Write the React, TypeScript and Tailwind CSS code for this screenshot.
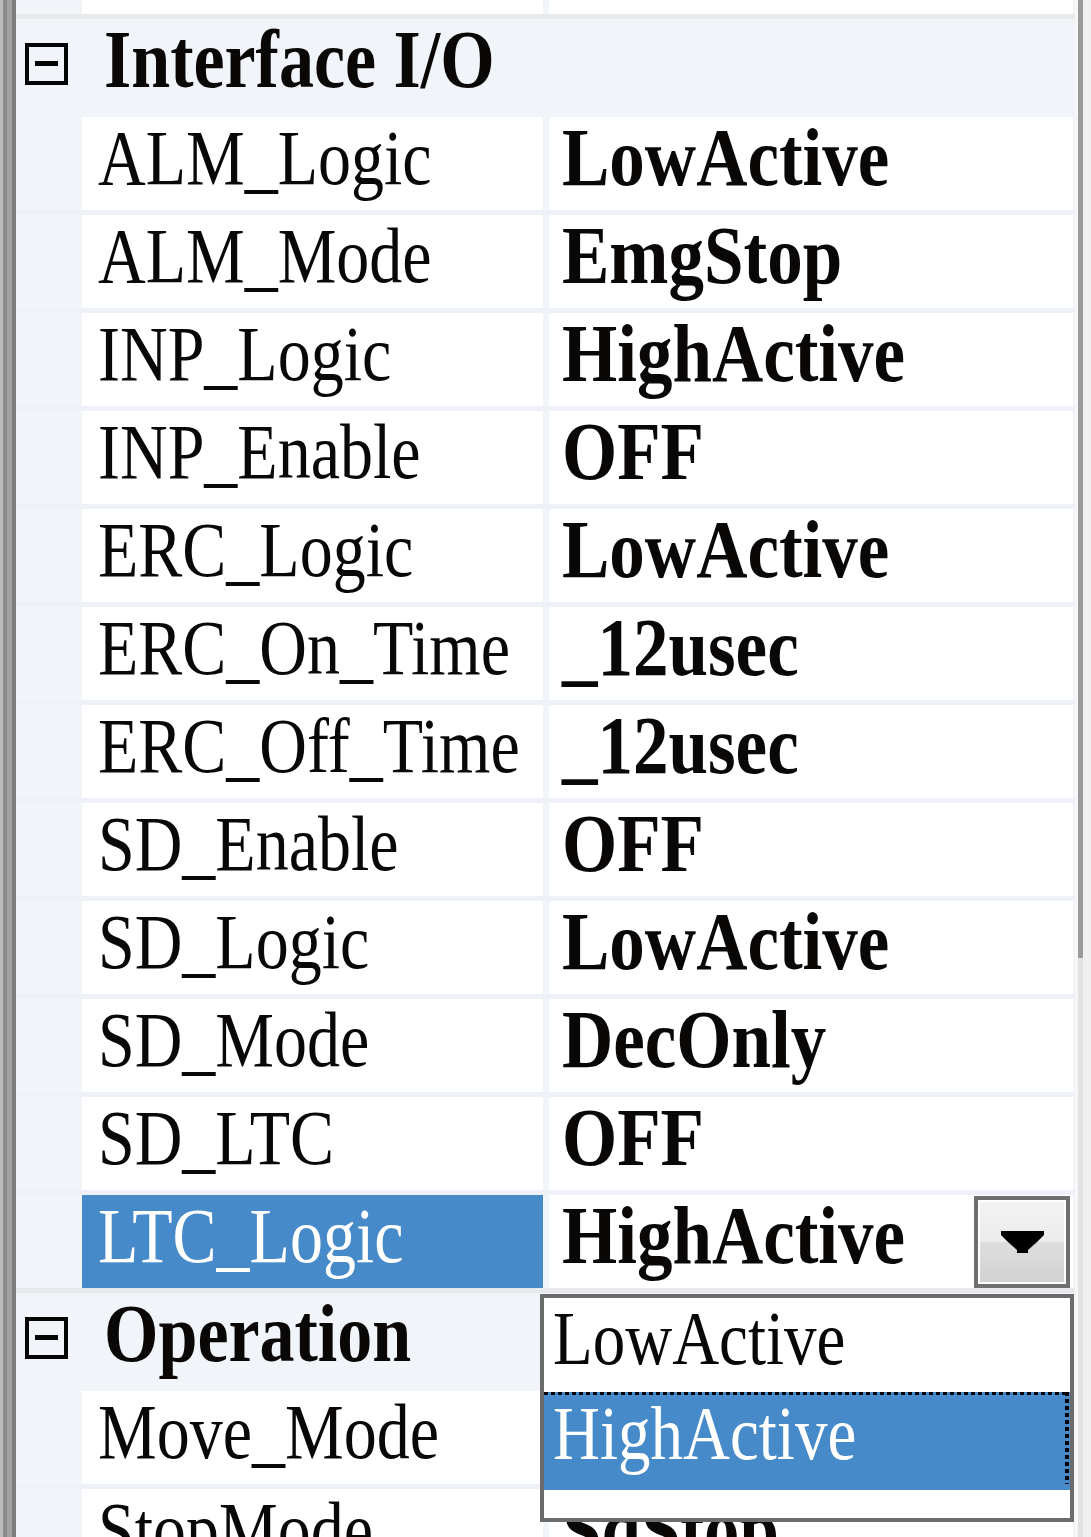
import React from "react";

type Row = { name: string; value: string; selected?: boolean; dropdown?: boolean };

const ioRows: Row[] = [
  { name: "ALM_Logic", value: "LowActive" },
  { name: "ALM_Mode", value: "EmgStop" },
  { name: "INP_Logic", value: "HighActive" },
  { name: "INP_Enable", value: "OFF" },
  { name: "ERC_Logic", value: "LowActive" },
  { name: "ERC_On_Time", value: "_12usec" },
  { name: "ERC_Off_Time", value: "_12usec" },
  { name: "SD_Enable", value: "OFF" },
  { name: "SD_Logic", value: "LowActive" },
  { name: "SD_Mode", value: "DecOnly" },
  { name: "SD_LTC", value: "OFF" },
  { name: "LTC_Logic", value: "HighActive", selected: true, dropdown: true },
];

const opRows: Row[] = [
  { name: "Move_Mode", value: "" },
  { name: "StopMode", value: "SdStop" },
];

function DropButton() {
  return (
    <div className="ml-auto mr-[3px] mt-[1px] h-[92px] w-[96px] shrink-0 border-[4px] border-[#6f6f6f] bg-white p-[2px]">
      <div className="flex h-full w-full flex-col">
        <div className="flex h-1/2 items-end justify-center bg-[linear-gradient(#f3f3f3,#ececec)]">
          <svg width="43" height="14" viewBox="0 0 43 14" className="block">
            <polygon points="0,3 43,3 43,7 36,14 7,14 0,7" fill="#000" />
          </svg>
        </div>
        <div className="flex h-1/2 items-start justify-center bg-[linear-gradient(#dedede,#d2d2d2)]">
          <svg width="43" height="11" viewBox="0 0 43 11" className="block">
            <polygon points="7,0 36,0 27,8 27,11 16,11 16,8" fill="#000" />
          </svg>
        </div>
      </div>
    </div>
  );
}

function DataRow({ row, gray }: { row: Row; gray?: boolean }) {
  return (
    <div className="flex shrink-0 flex-col">
      <div className="flex h-[93px]">
        <div className="w-[66px] shrink-0" />
        <div
          className={
            row.selected
              ? "flex w-[461px] shrink-0 items-center bg-[#468ac9] pl-[16px] text-white"
              : "flex w-[461px] shrink-0 items-center bg-white pl-[16px] text-[#0a0707]"
          }
        >
          <span className="mb-[12px] inline-block origin-center scale-y-[1.17] whitespace-nowrap text-[66px] leading-none">
            {row.name}
          </span>
        </div>
        <div className="w-[6px] shrink-0" />
        <div className="flex w-[524px] shrink-0 items-center bg-white pl-[13px] text-[#0a0707]">
          {row.value && (
            <span className="mb-[12px] inline-block origin-center scale-y-[1.17] whitespace-nowrap text-[71px] font-bold leading-none">
              {row.value}
            </span>
          )}
          {row.dropdown && <DropButton />}
        </div>
      </div>
      <div className={gray ? "h-[5px] bg-[#e8e9ea]" : "h-[5px] bg-[#eef2f8]"} />
    </div>
  );
}

function Category({ title }: { title: string }) {
  return (
    <div className="flex h-[98px] shrink-0 flex-col">
      <div className="flex h-[93px] items-center pl-[9px]">
        <div className="mb-[4px] flex h-[42px] w-[43px] shrink-0 items-center justify-center border-[4px] border-[#050505]">
          <div className="h-[5px] w-[23px] bg-[#050505]" />
        </div>
        <span className="mb-[12px] ml-[36px] inline-block origin-center scale-y-[1.17] whitespace-nowrap text-[70px] font-bold leading-none text-[#0a0707]">
          {title}
        </span>
      </div>
      <div className="h-[5px]" />
    </div>
  );
}

export default function App() {
  return (
    <div className="relative flex h-[1537px] w-[1091px] overflow-hidden bg-white font-['Liberation_Serif','Times_New_Roman',serif]">
      {/* left frame edge */}
      <div className="flex w-[16px] shrink-0">
        <div className="w-[3px] bg-[#bababa]" />
        <div className="w-[4px] bg-[#8a8a8a]" />
        <div className="w-[5px] bg-[#a2a2a2]" />
        <div className="w-[4px] bg-[#7f7f7f]" />
      </div>

      {/* grid */}
      <div className="flex w-[1059px] shrink-0 flex-col bg-[#f1f4f9]">
        {/* partial row above */}
        <div className="flex h-[14px] shrink-0">
          <div className="w-[66px] shrink-0" />
          <div className="w-[461px] shrink-0 bg-white" />
          <div className="w-[6px] shrink-0" />
          <div className="w-[524px] shrink-0 bg-white" />
        </div>
        <div className="h-[5px] shrink-0 bg-[#e8e9ea]" />
        <Category title="Interface I/O" />
        {ioRows.map((r, i) => (
          <DataRow key={r.name} row={r} gray={i === ioRows.length - 1} />
        ))}
        <Category title="Operation" />
        {opRows.map((r) => (
          <DataRow key={r.name} row={r} />
        ))}
      </div>

      {/* scrollbar strip */}
      <div className="flex w-[16px] shrink-0">
        <div className="w-[3px] bg-[#f7f7f7]" />
        <div className="flex w-[5px] flex-col">
          <div className="h-[958px] bg-[#9a9a9a]" />
          <div className="flex-1 bg-[#e2e2e2]" />
        </div>
        <div className="w-[8px] bg-[#f0f0f0]" />
      </div>

      {/* open dropdown list */}
      <div className="absolute left-[540px] top-[1294px] flex h-[228px] w-[534px] flex-col border-[4px] border-[#6b6b6b] bg-white">
        <div className="flex h-[94px] shrink-0 items-center pl-[9px] text-[#0a0707]">
          <span className="mb-[14px] inline-block origin-center scale-y-[1.17] whitespace-nowrap text-[65px] leading-none">
            LowActive
          </span>
        </div>
        <div className="flex h-[98px] shrink-0 flex-col bg-[#468ac9] pr-[4px]">
          <div className="h-[3px] bg-[repeating-linear-gradient(90deg,#000_0_4px,transparent_4px_7px)]" />
          <div className="flex flex-1">
            <div className="flex flex-1 items-center pl-[9px] text-white">
              <span className="mb-[18px] inline-block origin-center scale-y-[1.17] whitespace-nowrap text-[65px] leading-none">
                HighActive
              </span>
            </div>
          </div>
        </div>
        <div className="pointer-events-none absolute right-[1px] top-[94px] h-[92px] w-[4px] bg-[repeating-linear-gradient(180deg,#000_0_4px,transparent_4px_7px)]" />
      </div>
    </div>
  );
}
